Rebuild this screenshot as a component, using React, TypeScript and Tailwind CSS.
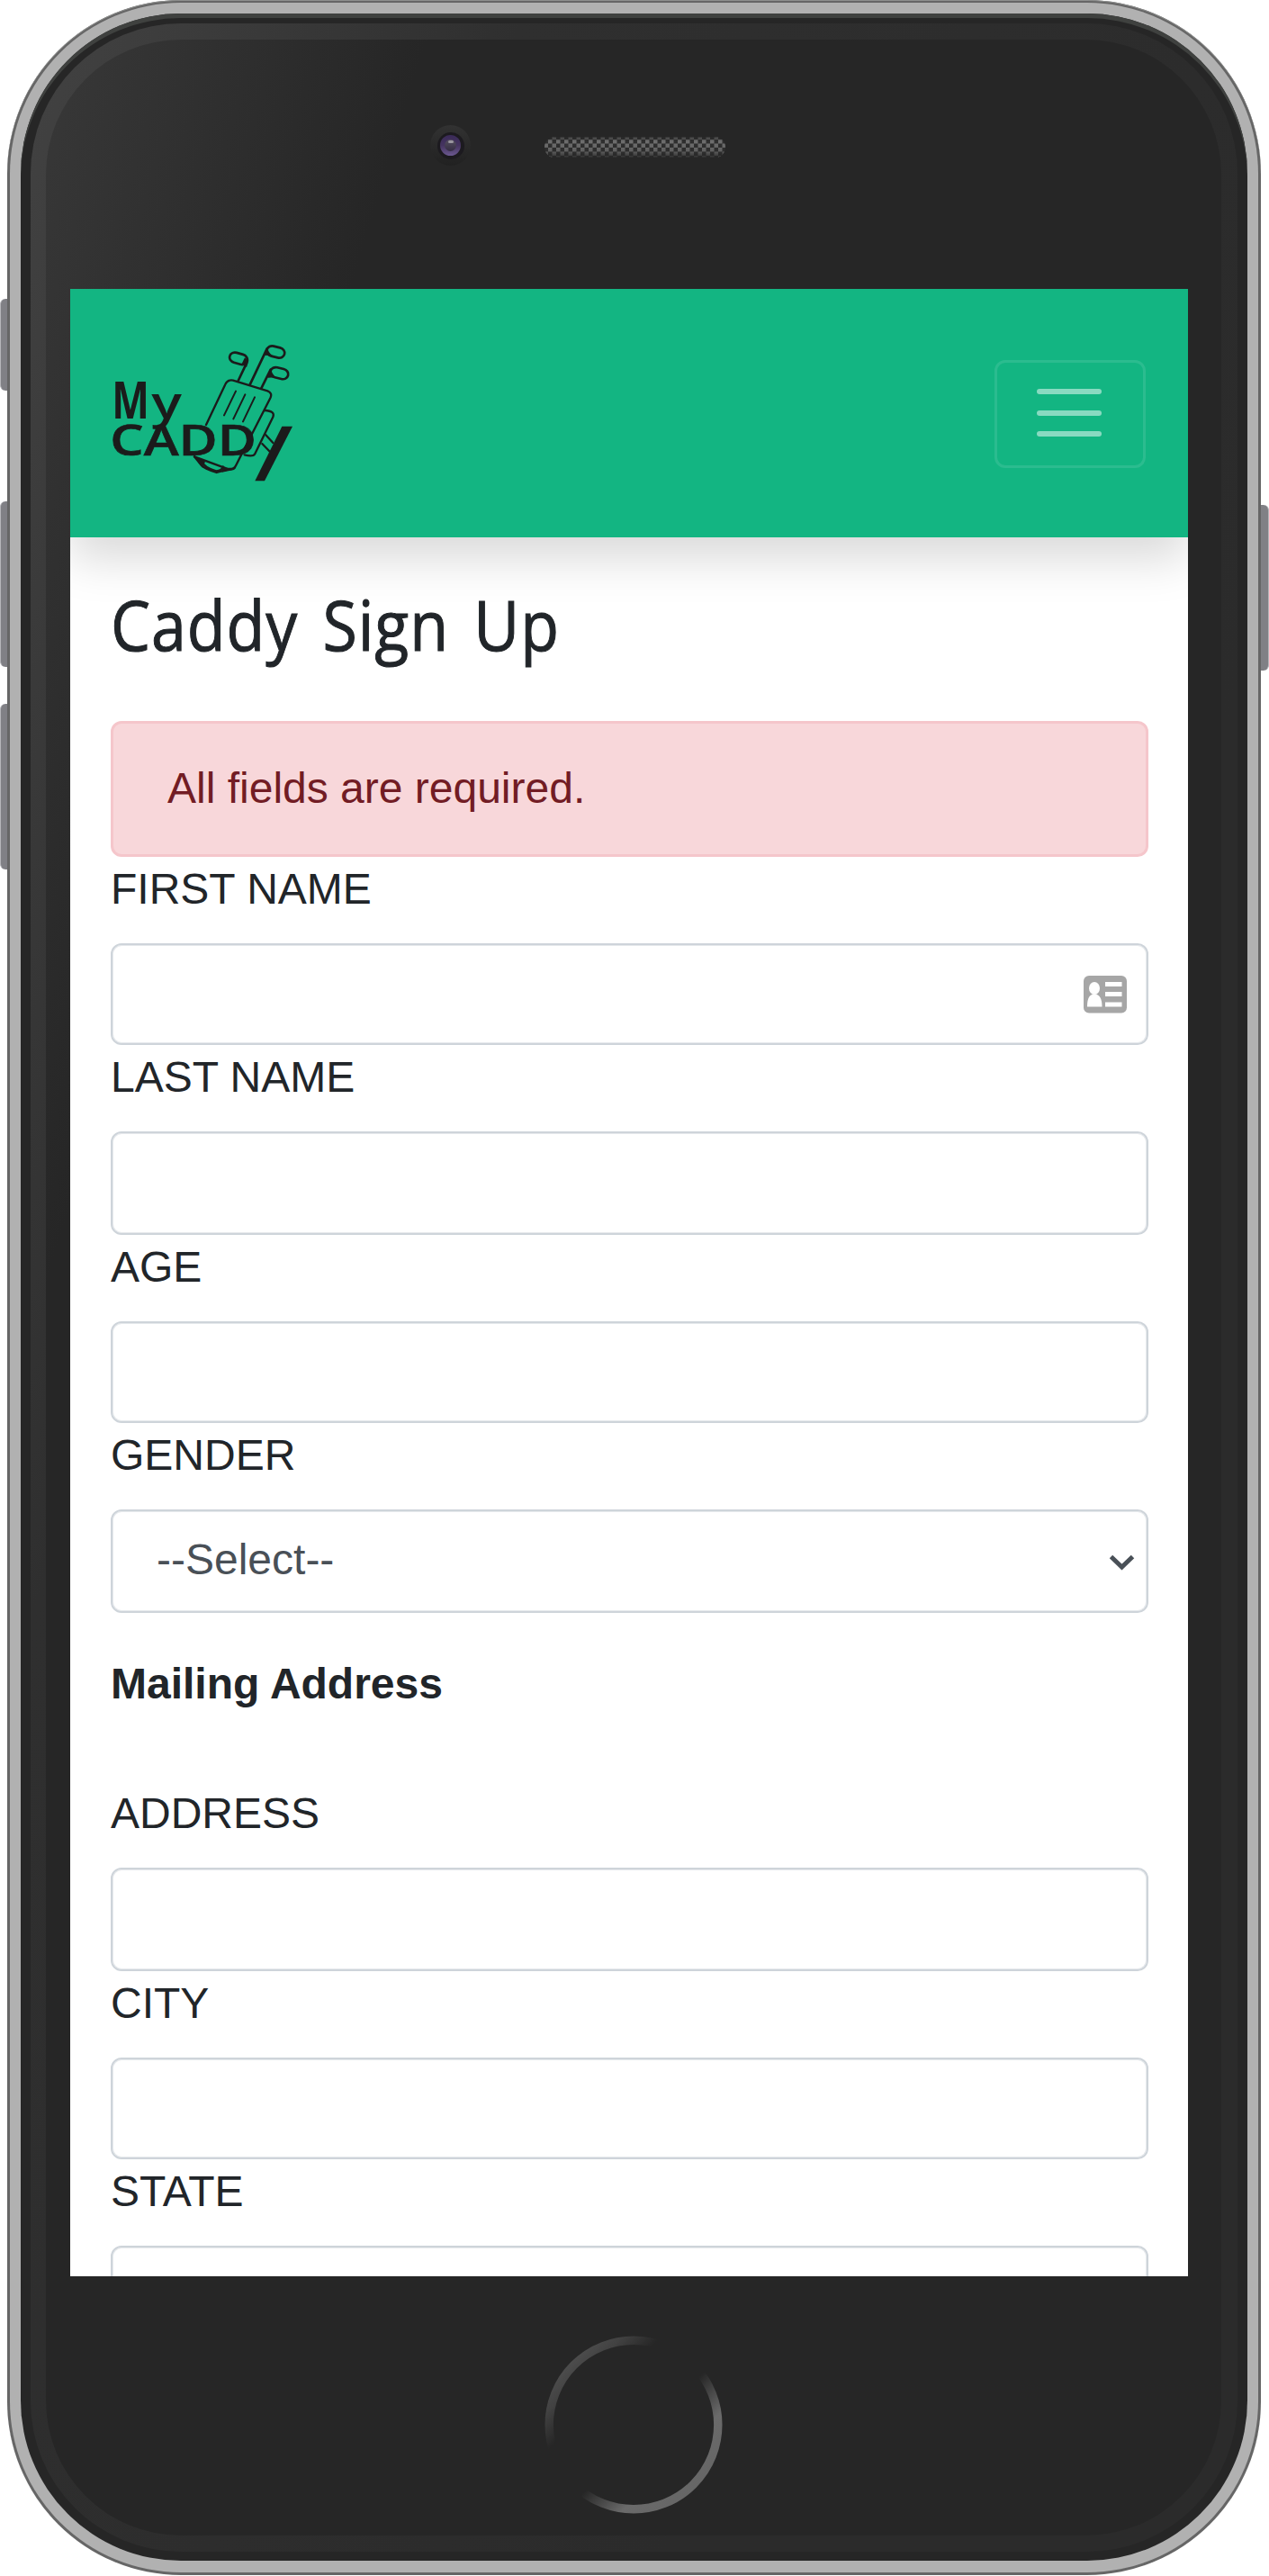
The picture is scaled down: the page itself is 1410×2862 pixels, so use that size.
import React from "react";

function Logo() {
  return (
    <svg viewBox="0 0 780 600" className="mt-[39px] ml-[22px] h-[200px] w-[260px]" fill="none" stroke="#1b1b1b">
      <g strokeWidth="7" strokeLinecap="round" strokeLinejoin="round">
        <path d="M387 336 L450 203 Q458 184 477 188 L592 223 Q609 230 601 247 L487 470 Q480 486 462 484 L348 442" />
        <path d="M348 442 L372 472 Q380 482 422 495 L462 484" />
        <path d="M372 456 Q378 478 422 491 Q440 488 444 476" strokeWidth="8" />
        <path d="M583 288 Q618 290 610 310 L549 434 Q543 443 515 436" />
        <path d="M586 370 L610 396 M574 399 L600 426" />
        <path d="M494 189 L522 130 M533 202 L590 82 M571 214 L602 152" strokeWidth="8" />
      </g>
      <g strokeWidth="6" strokeLinecap="round">
        <path d="M486 224 L447 304 M517 235 L478 316 M549 244 L510 325" />
      </g>
      <g strokeWidth="8">
        <rect x="465" y="98" width="60" height="34" rx="19" ry="16" transform="rotate(16 495 115)" />
        <rect x="589" y="76" width="60" height="34" rx="19" ry="16" transform="rotate(14 619 93)" />
        <rect x="601" y="147" width="60" height="34" rx="19" ry="16" transform="rotate(14 631 164)" />
      </g>
      <g fill="#1b1b1b" stroke="none">
        <path d="M505 134 L516 112 L529 122 L522 144 Z" />
        <path d="M584 94 L592 78 Q594 96 609 106 L582 104 Z" />
        <path d="M594 166 L604 149 Q606 168 621 178 L592 179 Z" />
        <path d="M345 440 L384 458 L376 480 Z M440 480 L487 479 L480 486 L440 494 Z" />
        <path d="M640 341 L675 341 L582 523 L550 523 Z" />
        <g fontFamily="'Open Sans', sans-serif">
          <text x="73" y="314" fontSize="174" fontWeight="700" textLength="125" lengthAdjust="spacingAndGlyphs">M</text>
          <text x="205" y="314" fontSize="152" fontWeight="600" textLength="101" lengthAdjust="spacingAndGlyphs">y</text>
          <text x="67" y="437" fontSize="143" fontWeight="600" stroke="#1b1b1b" strokeWidth="2" textLength="488" lengthAdjust="spacingAndGlyphs">CADD</text>
        </g>
      </g>
    </svg>
  );
}

function Camera() {
  return (
    <div className="mt-[95px] ml-[427px] flex h-[45px] w-[45px] items-center justify-center rounded-full bg-linear-to-b from-[#323232] to-[#212121]">
      <div className="flex h-[30px] w-[30px] items-center justify-center rounded-full bg-[#1c1a1f]">
        <div className="flex h-[23px] w-[23px] items-center justify-center rounded-full bg-linear-to-b from-[#3a2a58] via-[#45345f] to-[#6b5890]">
          <div className="flex h-[13px] w-[13px] justify-center rounded-full bg-linear-to-b from-[#55505f] to-[#352c44]">
            <div className="mt-px h-[3px] w-[6px] rounded-full bg-[#9a96a0]" />
          </div>
        </div>
      </div>
    </div>
  );
}

function Speaker() {
  return (
    <svg width="202" height="24" className="mt-[108px] ml-[82px]">
      <defs>
        <pattern id="mesh" width="9" height="9" patternUnits="userSpaceOnUse" x="4" y="3">
          <rect width="4.5" height="4.5" fill="#777" />
          <rect x="4.5" y="4.5" width="4.5" height="4.5" fill="#777" />
        </pattern>
        <linearGradient id="meshShade" x2="0" y2="1">
          <stop offset="0" stopColor="#262626" stopOpacity=".8" />
          <stop offset=".22" stopColor="#262626" stopOpacity=".1" />
          <stop offset=".7" stopColor="#262626" stopOpacity=".3" />
          <stop offset="1" stopColor="#262626" stopOpacity=".9" />
        </linearGradient>
      </defs>
      <rect width="201" height="23" rx="11.5" fill="#303030" />
      <rect width="201" height="23" rx="11.5" fill="url(#mesh)" />
      <rect width="201" height="23" rx="11.5" fill="url(#meshShade)" />
    </svg>
  );
}

function HomeButton() {
  return (
    <svg width="198" height="198" className="mx-auto mt-[66px] block">
      <defs>
        <linearGradient id="ring" x1="0" y1="0" x2="198" y2="198" gradientUnits="userSpaceOnUse">
          <stop offset=".15" stopColor="#4c4c4c" />
          <stop offset=".22" stopColor="#424242" />
          <stop offset=".33" stopColor="#262626" />
          <stop offset=".55" stopColor="#262626" />
          <stop offset=".71" stopColor="#6a6a6a" />
          <stop offset="1" stopColor="#626262" />
        </linearGradient>
      </defs>
      <circle cx="99" cy="99" r="93.8" fill="none" stroke="url(#ring)" strokeWidth="9.4" />
    </svg>
  );
}

function ContactCard() {
  return (
    <svg width="48" height="42" viewBox="0 0 48 42" className="mr-[22px]">
      <rect width="48" height="41.5" rx="6" fill="#a6a6a6" />
      <g fill="#fff">
        <ellipse cx="12" cy="14" rx="6" ry="7" />
        <path d="M4 34.5 C4 25 6.5 22 10 20.5 H14 C17.5 22 20.5 25 20.5 34.5 Z" />
        <rect x="24" y="7" width="18.5" height="5" />
        <rect x="24" y="18" width="18.5" height="5" />
        <rect x="24" y="29.5" width="18.5" height="5" />
      </g>
    </svg>
  );
}

const box =
  "flex w-full items-center rounded-[12px] border-2 border-[#ced4da] bg-white shadow-[inset_0_0_0_1px_rgba(206,212,218,0.5)]";

function Field({ label, tall, children }: { label: string; tall?: boolean; children?: React.ReactNode }) {
  return (
    <div>
      <label className="mb-[24px] block h-[72px] leading-[72px]">{label}</label>
      <div className={tall ? `${box} h-[115px]` : `${box} h-[113px]`}>{children}</div>
    </div>
  );
}

function Screen() {
  return (
    <div className="ml-[27px] h-[2208px] w-[1242px] overflow-hidden bg-white font-['Liberation_Sans',Arial,sans-serif] text-[48px] text-[#212529]">
      <nav className="relative flex h-[276px] justify-between bg-[#13b582] shadow-[0_24px_48px_rgba(0,0,0,0.15)]">
        <Logo />
        <button className="mt-[79px] mr-[47px] flex h-[120px] w-[168px] flex-col items-center gap-[17.5px] rounded-[12px] border-[3px] border-white/10 pt-[29px] pr-[2px]">
          <span className="h-[6px] w-[72px] rounded-full bg-white/50" />
          <span className="h-[6px] w-[72px] rounded-full bg-white/50" />
          <span className="h-[6px] w-[72px] rounded-full bg-white/50" />
        </button>
      </nav>
      <main className="ml-[45px] w-[1153px]">
        <h1 className="relative h-[204px] origin-left scale-x-[0.92] pt-[48px] font-['Open_Sans',sans-serif] text-[76px] leading-[98px] font-normal tracking-[1px] whitespace-nowrap [-webkit-text-stroke:1px_#212529] [word-spacing:9px]">
          Caddy Sign Up
        </h1>
        <div className="h-[151px] rounded-[12px] border-[3px] border-[#f5c6cb] bg-[#f8d7da] px-[60px] pt-[36px] leading-[72px] text-[#721c24]">
          All fields are required.
        </div>
        <Field label="FIRST NAME">
          <div className="flex w-full justify-end">
            <ContactCard />
          </div>
        </Field>
        <Field label="LAST NAME" tall />
        <Field label="AGE" />
        <Field label="GENDER" tall>
          <div className="flex w-full items-center justify-between pr-[13px] pl-[49px] text-[#495057]">
            <span className="mb-[4px] leading-[72px]">--Select--</span>
            <svg width="29" height="18" viewBox="0 0 29 18" className="mt-[2px]" fill="none" stroke="#495057" strokeWidth="5">
              <path d="M2.5 2.5 L14.5 14 L26.5 2.5" />
            </svg>
          </div>
        </Field>
        <p className="mt-[43px] mb-[72px] h-[72px] leading-[72px] font-bold">Mailing Address</p>
        <Field label="ADDRESS" tall />
        <Field label="CITY" />
        <Field label="STATE" tall />
      </main>
    </div>
  );
}

export default function App() {
  return (
    <div className="relative h-[2862px] w-[1410px] overflow-hidden bg-white">
      <div className="absolute top-[332px] left-0 h-[102px] w-[12px] rounded-l-[6px] border-l border-[#b5b5b9] bg-[#808085]" />
      <div className="absolute top-[557px] left-0 h-[184px] w-[12px] rounded-l-[6px] border-l border-[#b5b5b9] bg-[#808085]" />
      <div className="absolute top-[782px] left-0 h-[184px] w-[12px] rounded-l-[6px] border-l border-[#b5b5b9] bg-[#808085]" />
      <div className="absolute top-[561px] right-0 h-[184px] w-[12px] rounded-r-[6px] border-r border-[#b5b5b9] bg-[#808085]" />
      <div className="relative ml-[8px] h-[2861px] w-[1393px] rounded-[193px] bg-[#666] p-[3px] shadow-[inset_0_1px_0_#8e8f8e]">
        <div className="h-full rounded-[190px] bg-[#b1b1b1] px-[12px] pt-[12px] pb-[13px]">
          <div className="h-full rounded-[178px] bg-[#262626] pt-[11px] pr-[11px] pb-[10px] pl-[11px] shadow-[inset_0_5px_0_#3f413f]">
            <div className="h-full rounded-[167px] bg-[linear-gradient(107deg,#424242_0px,#2f2f2f_520px,#2b2b2b_1500px)] pt-[18px] pr-[18px] pb-[18px] pl-[17px]">
              <div className="h-full rounded-[150px] bg-[linear-gradient(107deg,#383838_0px,#262626_405px)]">
                <div className="flex h-[277px] items-start">
                  <Camera />
                  <Speaker />
                </div>
                <Screen />
                <HomeButton />
              </div>
            </div>
          </div>
        </div>
      </div>
    </div>
  );
}
